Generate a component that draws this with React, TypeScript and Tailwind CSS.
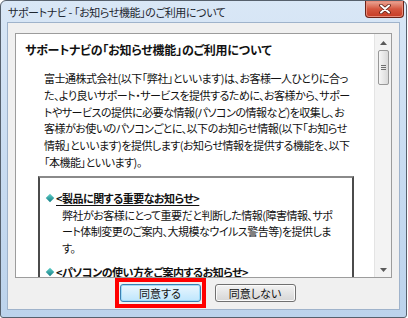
import React from 'react';

const jp = "font-['Noto_Sans_CJK_JP','Noto_Sans',sans-serif] [font-feature-settings:'palt']";

const bodyLines = [
    '富士通株式会社(以下「弊社」といいます)は、お客様一人ひとりに合っ',
    'た、より良いサポート・サービスを提供するために、お客様から、サポー',
    'トやサービスの提供に必要な情報(パソコンの情報など)を収集し、お',
    '客様がお使いのパソコンごとに、以下のお知らせ情報(以下「お知らせ',
    '情報」といいます)を提供します(お知らせ情報を提供する機能を、以下',
    '「本機能」といいます)。',
];

const itemLines = [
    '弊社がお客様にとって重要だと判断した情報(障害情報、サポ',
    'ート体制変更のご案内、大規模なウイルス警告等)を提供しま',
    'す。',
];

const Diamond = () => (
    <span className="inline-block w-[6px] h-[6px] rotate-45 bg-gradient-to-br from-[#5fd0c8] to-[#0a7f86] shrink-0" />
);

const Arrow = ({ up }: { up?: boolean }) => (
    <svg width="7" height="4" viewBox="0 0 7 4">
        {up ? <path d="M3.5 0 L7 4 L0 4 Z" fill="#5a5a5a" /> : <path d="M0 0 L7 0 L3.5 4 Z" fill="#5a5a5a" />}
    </svg>
);

const Scrollbar = () => (
    <div className="w-[17px] flex flex-col items-center bg-[#f3f3f3] border-l border-[#e4e4e4]">
        <div className="mt-[7px]"><Arrow up /></div>
        <div className="mt-[5px] w-[11px] h-[35px] rounded-[2px] border border-[#989898] bg-gradient-to-r from-[#f6f6f6] to-[#d9d9d9] flex flex-col items-center justify-center gap-[1px]">
            <span className="w-[5px] h-px bg-[#6f6f6f]" />
            <span className="w-[5px] h-px bg-[#6f6f6f]" />
            <span className="w-[5px] h-px bg-[#6f6f6f]" />
        </div>
        <div className="flex-1" />
        <div className="mb-[5px]"><Arrow /></div>
    </div>
);

const DlgButton = ({ label, primary }: { label: string; primary?: boolean }) => (
    <button
        className={
            primary
                ? `w-[81px] h-[18px] rounded-[3px] border border-[#3c7fb1] bg-gradient-to-b from-[#eaf6fd] to-[#bee6fd] text-[11px] leading-none text-[#111] shadow-[inset_0_0_0_1px_#9fdcf9] ${jp}`
                : `w-[81px] h-[18px] rounded-[3px] border border-[#707070] bg-gradient-to-b from-[#f2f2f2] to-[#d6d6d6] text-[11px] leading-none text-[#111] shadow-[inset_0_0_0_1px_#fbfbfb] ${jp}`
        }
    >
        {label}
    </button>
);

const App: React.FC = () => {
    return (
        <div className="w-[408px] h-[318px] bg-white">
            <div className="w-[407px] h-[318px] flex flex-col rounded-t-[6px] rounded-b-[3px] border border-[#56606c] bg-gradient-to-b from-[#d9e7f6] via-[#c9dcf1] to-[#bcd3ec]">
                {/* title bar */}
                <div className="h-[21px] flex items-start justify-between">
                    <span className={`pl-[7px] pt-[4px] text-[11px] tracking-[-0.4px] leading-[14px] text-[#1e2630] whitespace-nowrap ${jp}`}>
                        サポートナビ - 「お知らせ機能」のご利用について
                    </span>
                    <div className="mr-[2px] w-[39px] h-[17px] rounded-b-[4px] border border-t-0 border-[#6b2318] bg-gradient-to-b from-[#eaa898] via-[#d4563f] to-[#c63b24] flex items-center justify-center shadow-[inset_0_0_0_1px_#e88c7a]">
                        <svg width="12" height="10" viewBox="0 0 12 10">
                            <path d="M2 1.5 L10 8.5 M10 1.5 L2 8.5" stroke="#5a1f16" strokeWidth="3.6" strokeLinecap="round" />
                            <path d="M2 1.5 L10 8.5 M10 1.5 L2 8.5" stroke="#ffffff" strokeWidth="2" strokeLinecap="round" />
                        </svg>
                    </div>
                </div>

                {/* client area */}
                <div className="mx-[6px] h-[288px] border border-[#9fb3cb] bg-[#f0f0f0] pl-[7px] pt-[10px] flex flex-col">
                    <div className="flex w-[377px] h-[245px] border border-[#9c9c9c] bg-white overflow-hidden">
                        <div className={`flex-1 overflow-hidden text-[#111] ${jp}`}>
                            <div className="pt-[7px] pl-[9px] text-[12px] tracking-[-0.2px] leading-[17px] font-bold whitespace-nowrap">
                                サポートナビの「お知らせ機能」のご利用について
                            </div>
                            <div className="mt-[12px] pl-[28px] text-[11px] tracking-[-0.5px] leading-[16.8px]">
                                {bodyLines.map((l, i) => (
                                    <div key={i} className="whitespace-nowrap">{l}</div>
                                ))}
                            </div>
                            <div className="mt-[5px] ml-[22px] w-[316px] h-[120px] border-2 border-[#4b4b4b] border-t-[#8a8a8a] pl-[7px] pt-[12px] text-[11px] tracking-[-0.5px] leading-[16.8px]">
                                <div className="flex items-center gap-[3px]">
                                    <Diamond />
                                    <span className="font-bold underline underline-offset-2 whitespace-nowrap">&lt;製品に関する重要なお知らせ&gt;</span>
                                </div>
                                <div className="pl-[15px]">
                                    {itemLines.map((l, i) => (
                                        <div key={i} className="whitespace-nowrap">{l}</div>
                                    ))}
                                </div>
                                <div className="mt-[7px] flex items-center gap-[3px]">
                                    <Diamond />
                                    <span className="font-bold underline underline-offset-2 whitespace-nowrap">&lt;パソコンの使い方をご案内するお知らせ&gt;</span>
                                </div>
                            </div>
                        </div>
                        <Scrollbar />
                    </div>

                    {/* buttons */}
                    <div className="flex items-center justify-center gap-[9px] pr-[4px]">
                        <div className="w-[91px] h-[30px] border-[4px] border-[#ff0000] flex items-center justify-center">
                            <DlgButton label="同意する" primary />
                        </div>
                        <DlgButton label="同意しない" />
                    </div>
                </div>
            </div>
        </div>
    );
};

export default App;
